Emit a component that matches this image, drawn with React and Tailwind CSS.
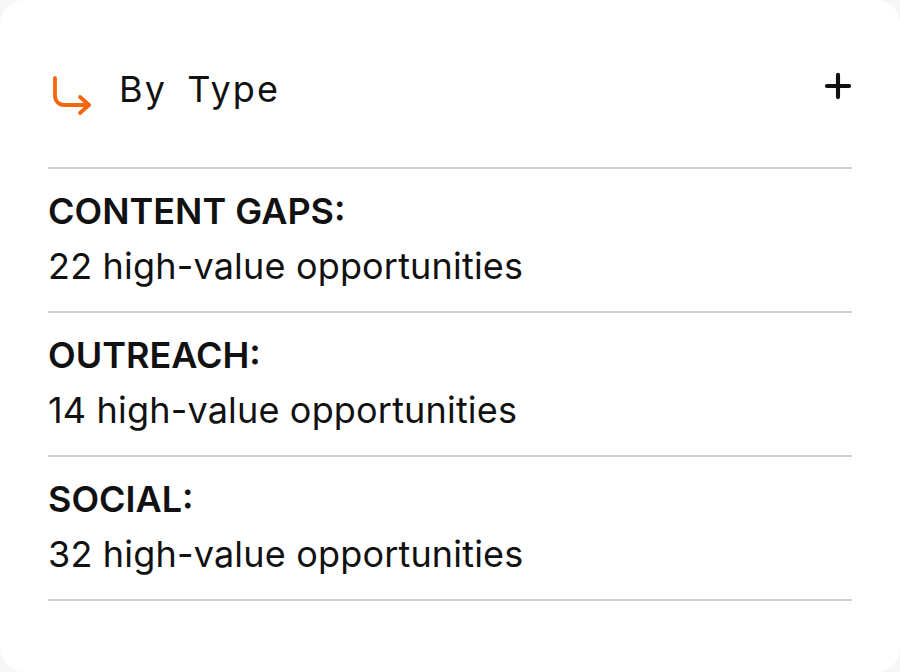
import { Plus } from 'lucide-react';

const items = [
  { label: 'CONTENT GAPS:', count: 22 },
  { label: 'OUTREACH:', count: 14 },
  { label: 'SOCIAL:', count: 32 },
];

const CornerArrow = () => (
  <svg width="40" height="40" viewBox="0 0 40 40" fill="none" stroke="#f5670f" strokeWidth="3.8" strokeLinecap="round" strokeLinejoin="round">
    <path d="M3 2v18a9 9 0 0 0 9 9h25" />
    <path d="M28 21l9 8-9 8" />
  </svg>
);

const App = () => {
  return (
    <div className="w-[900px] h-[672px] bg-[#f6f6f6]" style={{ fontFamily: 'Inter, "Noto Sans", sans-serif' }}>
      <div className="w-full h-full bg-white rounded-[24px] px-12 text-[#111]">
        <div className="flex items-center justify-between h-[56px] pt-[60px] box-content">
          <div className="flex items-center">
            <div className="ml-[4px] mt-[16px]">
              <CornerArrow />
            </div>
            <span className="ml-[27px] mt-[2px] text-[36px] tracking-[0.06em] [word-spacing:0.22em] leading-none">By Type</span>
          </div>
          <Plus className="w-[38px] h-[38px] -mr-[5px] -mt-[4px]" strokeWidth={2.6} />
        </div>

        <div className="mt-[51px] border-t-2 border-[#cfcfcf]">
          {items.map((item) => (
            <div key={item.label} className="h-[144px] border-b-2 border-[#cfcfcf] pt-[22px]">
              <div className="text-[36px] font-semibold leading-[40px] tracking-[0em]">{item.label}</div>
              <div className="mt-[15px] text-[36px] leading-[40px] tracking-[0.005em]">{item.count} high-value opportunities</div>
            </div>
          ))}
        </div>
      </div>
    </div>
  );
};

export default App;
